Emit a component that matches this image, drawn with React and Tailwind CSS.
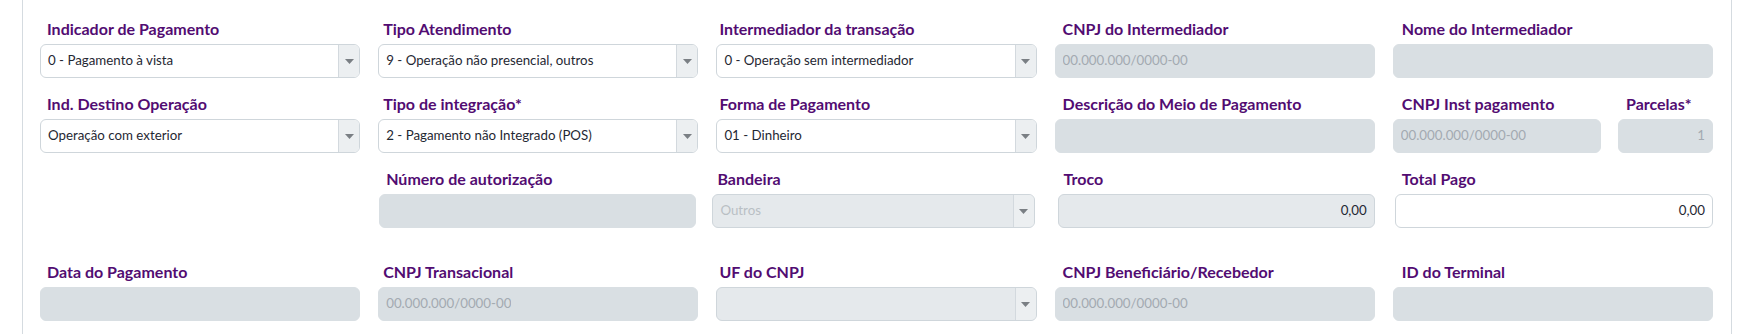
import React from 'react';

const LABEL = 'block h-5 leading-5 mb-[5px] text-[16px] font-bold text-[#520c72] whitespace-nowrap';
const FONT = { fontFamily: 'Lato, "Open Sans", sans-serif' };

function Caret() {
    return (
        <svg width="9" height="5" viewBox="0 0 9 5">
            <path d="M0 0 L9 0 L4.5 5 Z" fill="#7a7f84" />
        </svg>
    );
}

function Select({ value, disabled = false }) {
    return (
        <div
            className={`flex h-[34px] items-stretch rounded-[6px] border border-[#cfd6db] overflow-hidden ${
                disabled ? 'bg-[#e5e9ec]' : 'bg-white'
            }`}
        >
            <div
                className={`flex-1 flex items-center pl-[7px] text-[13.3px] truncate ${
                    disabled ? 'text-[#b9bfc4]' : 'text-[#1f2833]'
                }`}
            >
                {value}
            </div>
            <div className="w-[21px] flex items-center justify-center border-l border-[#d3d9de] bg-[#eceff1]">
                <Caret />
            </div>
        </div>
    );
}

function Input({ placeholder = '', value = '', right = false, variant = 'disabled' }) {
    const styles = {
        disabled: 'bg-[#d9dfe3] border-[#d9dfe3]',
        readonly: 'bg-[#e5e9ec] border-[#cfd6db]',
        white: 'bg-white border-[#cfd6db]',
    };
    return (
        <div
            className={`flex h-[34px] items-center rounded-[6px] border px-[7px] text-[13.3px] ${styles[variant]} ${
                right ? 'justify-end' : ''
            }`}
        >
            {value ? (
                <span className={variant === 'disabled' ? 'text-[#a3aab1]' : 'text-[#1f2833]'}>{value}</span>
            ) : (
                <span className="text-[#a3aab1] truncate">{placeholder}</span>
            )}
        </div>
    );
}

function Field({ label, children, pad = 'pl-[7px]', className = '' }) {
    return (
        <div className={className}>
            <label className={`${LABEL} ${pad}`}>{label}</label>
            {children}
        </div>
    );
}

const CNPJ = '00.000.000/0000-00';

export default function App() {
    return (
        <div className="w-full bg-white" style={FONT}>
            <div className="ml-[22px] mr-[11px] border-x border-[#d5dbe0] pl-[17px] pr-[18px] pt-[19px] pb-[13px]">
                <div className="grid grid-cols-5 gap-x-[18px]">
                    {/* Row 1 */}
                    <Field label="Indicador de Pagamento">
                        <Select value="0 - Pagamento à vista" />
                    </Field>
                    <Field label="Tipo Atendimento" pad="pl-[5px]">
                        <Select value="9 - Operação não presencial, outros" />
                    </Field>
                    <Field label="Intermediador da transação" pad="pl-[3px]">
                        <Select value="0 - Operação sem intermediador" />
                    </Field>
                    <Field label="CNPJ do Intermediador" pad="pl-2">
                        <Input placeholder={CNPJ} />
                    </Field>
                    <Field label="Nome do Intermediador" pad="pl-[9px]">
                        <Input />
                    </Field>

                    {/* Row 2 */}
                    <Field label="Ind. Destino Operação" className="mt-4">
                        <Select value="Operação com exterior" />
                    </Field>
                    <Field label="Tipo de integração*" pad="pl-[5px]" className="mt-4">
                        <Select value="2 - Pagamento não Integrado (POS)" />
                    </Field>
                    <Field label="Forma de Pagamento" pad="pl-[3px]" className="mt-4">
                        <Select value="01 - Dinheiro" />
                    </Field>
                    <Field label="Descrição do Meio de Pagamento" pad="pl-2" className="mt-4">
                        <Input />
                    </Field>
                    <div className="mt-4 flex gap-[17px]">
                        <Field label="CNPJ Inst pagamento" pad="pl-[9px]" className="flex-1">
                            <Input placeholder={CNPJ} />
                        </Field>
                        <Field label="Parcelas*" pad="pl-2" className="w-[95px]">
                            <Input value="1" right />
                        </Field>
                    </div>

                    {/* Row 3 */}
                    <div className="mt-4" />
                    <Field label="Número de autorização" pad="pl-[7px]" className="mt-4 ml-px mr-[2px]">
                        <Input />
                    </Field>
                    <Field label="Bandeira" pad="pl-[5px]" className="mt-4 -ml-[4px] mr-[2px]">
                        <Select value="Outros" disabled />
                    </Field>
                    <Field label="Troco" pad="pl-[6px]" className="mt-4 ml-[3px]">
                        <Input value="0,00" right variant="readonly" />
                    </Field>
                    <Field label="Total Pago" pad="pl-[7px]" className="mt-4 ml-[2px]">
                        <Input value="0,00" right variant="white" />
                    </Field>

                    {/* Row 4 */}
                    <Field label="Data do Pagamento" className="mt-[34px]">
                        <Input />
                    </Field>
                    <Field label="CNPJ Transacional" pad="pl-[5px]" className="mt-[34px]">
                        <Input placeholder={CNPJ} />
                    </Field>
                    <Field label="UF do CNPJ" pad="pl-[3px]" className="mt-[34px]">
                        <Select value="" disabled />
                    </Field>
                    <Field label="CNPJ Beneficiário/Recebedor" pad="pl-2" className="mt-[34px]">
                        <Input placeholder={CNPJ} />
                    </Field>
                    <Field label="ID do Terminal" pad="pl-[9px]" className="mt-[34px]">
                        <Input />
                    </Field>
                </div>
            </div>
        </div>
    );
}
